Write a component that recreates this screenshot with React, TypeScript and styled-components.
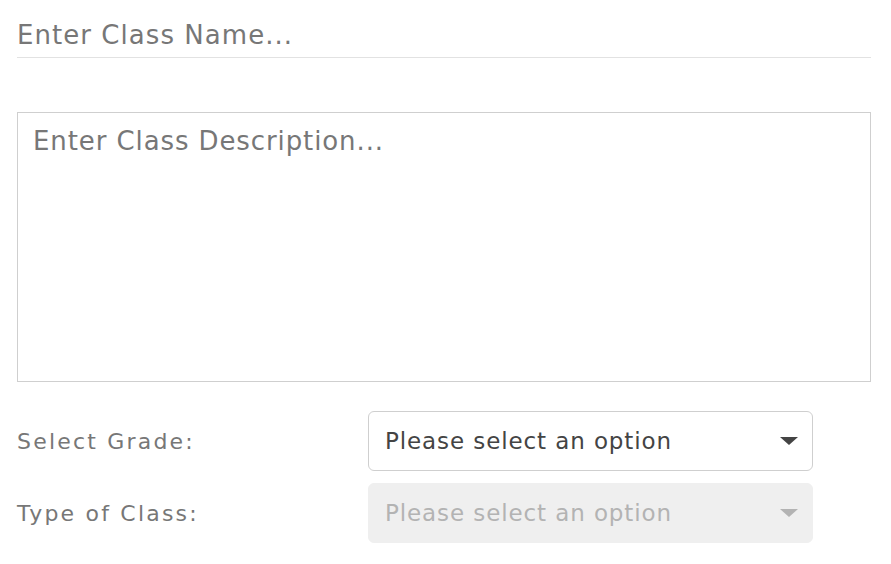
import React from "react";
import styled, { createGlobalStyle } from "styled-components";

const GlobalStyle = createGlobalStyle`
  html, body {
    margin: 0;
    padding: 0;
    background: #fff;
  }
  body {
    font-family: "DejaVu Sans", "Liberation Sans", sans-serif;
  }
`;

type SelectProps = {
  disabled?: boolean;
};

const App = () => {
  return (
    <>
      <GlobalStyle />
      <FormWrapper>
        <NameInput placeholder="Enter Class Name..." />
        <DescriptionArea placeholder="Enter Class Description..." />
        <FieldRow>
          <FieldLabel>Select Grade:</FieldLabel>
          <SelectBox>
            <SelectText>Please select an option</SelectText>
            <Arrow />
          </SelectBox>
        </FieldRow>
        <FieldRow>
          <FieldLabel>Type of Class:</FieldLabel>
          <SelectBox disabled>
            <SelectText disabled>Please select an option</SelectText>
            <Arrow disabled />
          </SelectBox>
        </FieldRow>
      </FormWrapper>
    </>
  );
};

export default App;

const FormWrapper = styled.div`
  width: 854px;
  padding: 0 20px 0 17px;
  display: flex;
  flex-direction: column;
`;

const NameInput = styled.input`
  box-sizing: border-box;
  width: 100%;
  height: 58px;
  padding: 12px 0 0 0;
  border: none;
  border-bottom: 1px solid #e2e2e2;
  outline: none;
  font-family: inherit;
  font-size: 26px;
  letter-spacing: 1.05px;
  color: #444;
  &::placeholder {
    color: #777;
  }
`;

const DescriptionArea = styled.textarea`
  box-sizing: border-box;
  width: 100%;
  height: 270px;
  margin-top: 54px;
  padding: 10px 15px;
  border: 1px solid #cfcfcf;
  outline: none;
  resize: none;
  font-family: inherit;
  font-size: 26px;
  letter-spacing: 0.9px;
  line-height: 1.45;
  color: #444;
  &::placeholder {
    color: #777;
  }
`;

const FieldRow = styled.div`
  display: flex;
  align-items: center;
  margin-top: 12px;
  &:first-of-type {
    margin-top: 29px;
  }
`;

const FieldLabel = styled.div`
  width: 351px;
  font-size: 22px;
  letter-spacing: 2.2px;
  color: #777;
`;

const SelectBox = styled.div<SelectProps>`
  box-sizing: border-box;
  width: 445px;
  height: 60px;
  display: flex;
  align-items: center;
  justify-content: space-between;
  padding: 0 14px 0 16px;
  border-radius: 6px;
  border: 1px solid ${(p) => (p.disabled ? "#efefef" : "#cfcfcf")};
  background: ${(p) => (p.disabled ? "#efefef" : "#fff")};
`;

const SelectText = styled.span<SelectProps>`
  font-size: 23px;
  letter-spacing: 0.9px;
  color: ${(p) => (p.disabled ? "#b3b3b3" : "#444")};
`;

const Arrow = styled.span<SelectProps>`
  width: 0;
  height: 0;
  border-left: 9px solid transparent;
  border-right: 9px solid transparent;
  border-top: 8px solid ${(p) => (p.disabled ? "#b3b3b3" : "#444")};
`;
